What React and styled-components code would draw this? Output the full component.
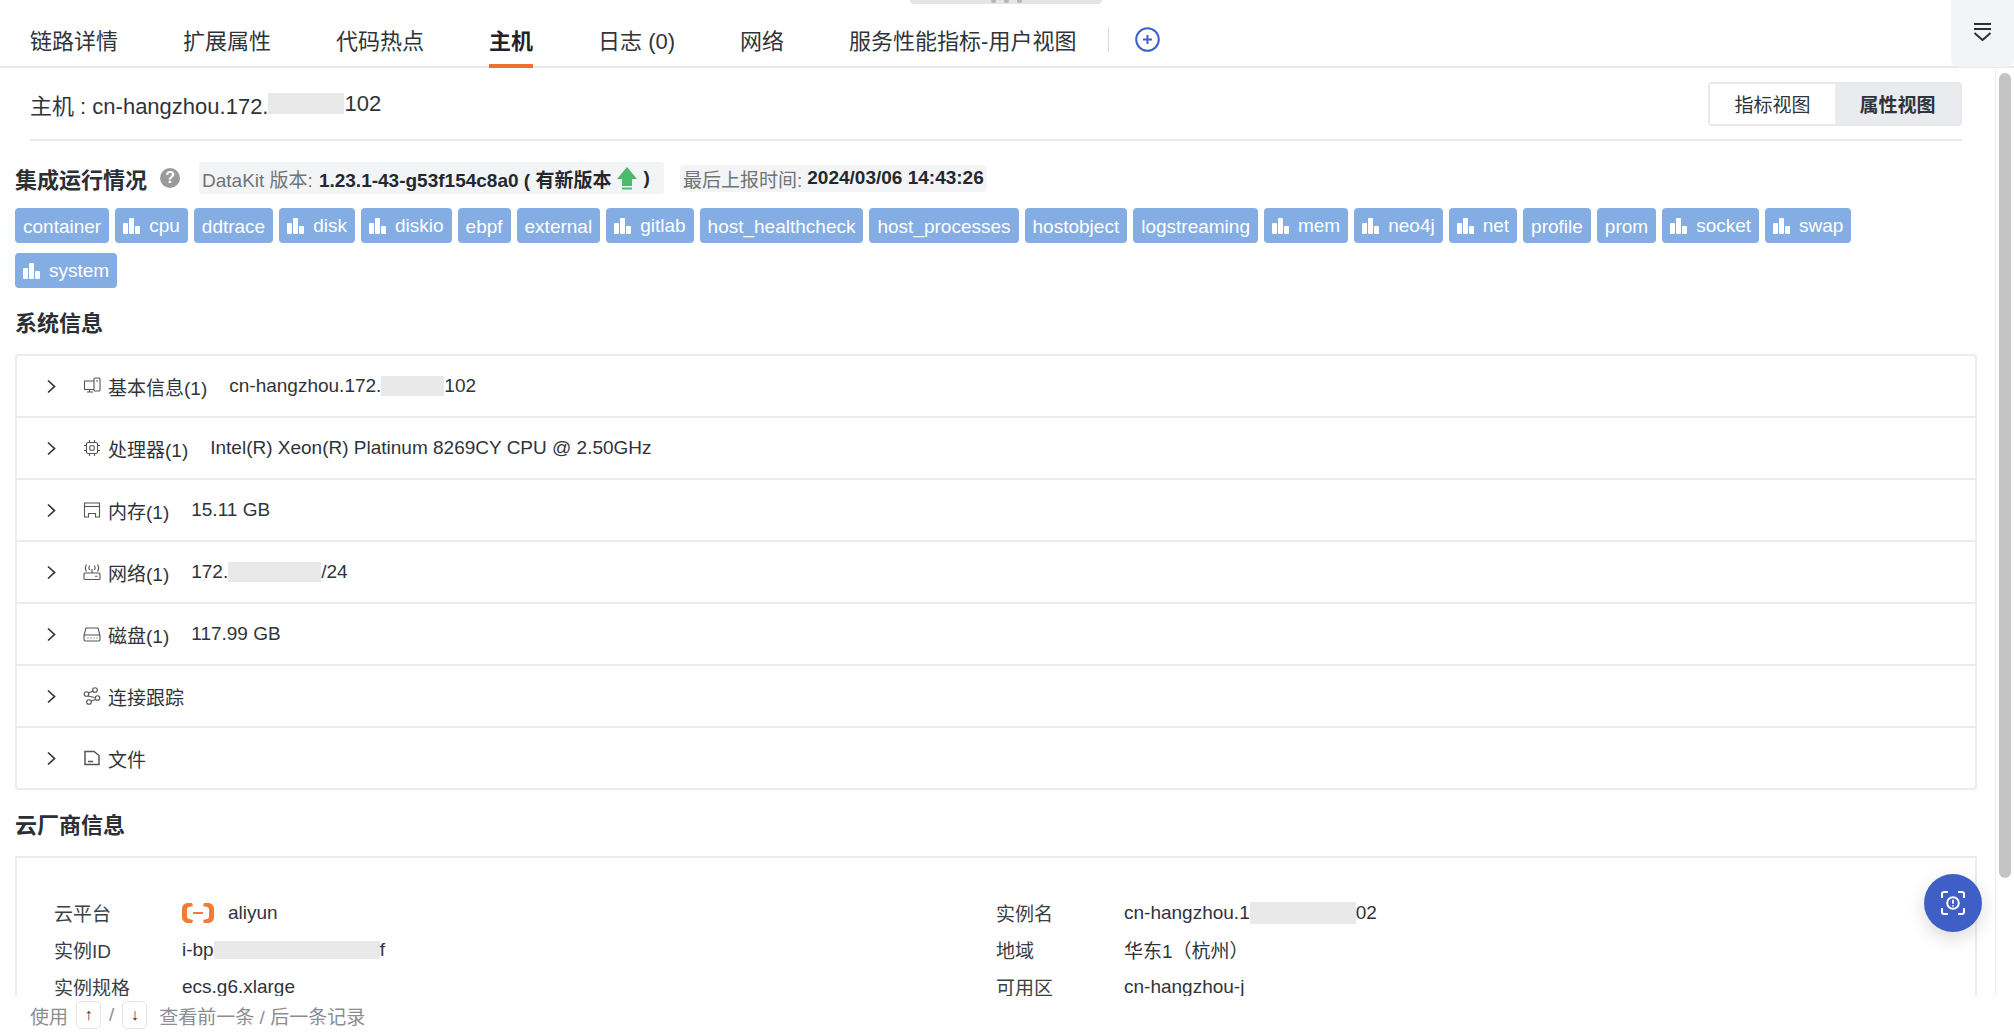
import React from "react";
import styled, { createGlobalStyle } from "styled-components";

const FONT = `"Liberation Sans", Arial, "Noto Sans CJK SC", sans-serif`;

const tabs = ["链路详情", "扩展属性", "代码热点", "主机", "日志 (0)", "网络", "服务性能指标-用户视图"];

const tags = [
  ["container", false],
  ["cpu", true],
  ["ddtrace", false],
  ["disk", true],
  ["diskio", true],
  ["ebpf", false],
  ["external", false],
  ["gitlab", true],
  ["host_healthcheck", false],
  ["host_processes", false],
  ["hostobject", false],
  ["logstreaming", false],
  ["mem", true],
  ["neo4j", true],
  ["net", true],
  ["profile", false],
  ["prom", false],
  ["socket", true],
  ["swap", true],
  ["system", true],
];

const BarsIcon = () => (
  <svg width="17" height="16" viewBox="0 0 17 16" fill="#fff">
    <rect x="0" y="5" width="5" height="11" rx="1" />
    <rect x="6" y="0" width="5" height="16" rx="1" />
    <rect x="12" y="8" width="5" height="8" rx="1" />
  </svg>
);

const Chevron = () => (
  <svg width="9" height="15" viewBox="0 0 9 15" fill="none" stroke="#333" strokeWidth="1.7">
    <path d="M1 1.5 L7.5 7.5 L1 13.5" />
  </svg>
);

const RowSvg = ({ children }) => (
  <svg width="18" height="18" viewBox="0 0 18 18" fill="none" stroke="#555" strokeWidth="1.1">
    {children}
  </svg>
);

const HostIcon = () => (
  <RowSvg>
    <path d="M11 4H1.500v8.500H11M4 15h6M6.500 12.500V15" />
    <rect x="11" y="1" width="6" height="13" rx="1" />
    <path d="M13 4h2" />
  </RowSvg>
);
const CpuIcon = () => (
  <RowSvg>
    <rect x="3.500" y="3.500" width="11" height="11" rx="1.500" />
    <rect x="6.800" y="6.800" width="4.400" height="4.400" rx="1" />
    <path d="M6.500 1v2.500M11.500 1v2.500M6.500 14.500V17M11.500 14.500V17M1 6.500h2.500M1 11.500h2.500M14.500 6.500H17M14.500 11.500H17" />
  </RowSvg>
);
const MemoryIcon = () => (
  <RowSvg>
    <path d="M1.500 2h15v14h-4v-3.500h-7V16h-4z" />
    <path d="M1.500 5.500h15" />
  </RowSvg>
);
const NetworkIcon = () => (
  <RowSvg>
    <rect x="1" y="10" width="16" height="6.500" rx="1" />
    <path d="M12 13.300h2.500M9 6v4M6.500 2.500c-.8 1.500-.8 3 0 4.500M11.500 2.500c.8 1.500.8 3 0 4.500M3.500 1.500c-1.300 2-1.300 5 0 7M14.500 1.500c1.300 2 1.300 5 0 7" />
  </RowSvg>
);
const DiskIcon = () => (
  <RowSvg>
    <path d="M1 10.500L3 3h12l2 7.500" />
    <rect x="1" y="10" width="16" height="6" rx="1.500" />
    <path d="M4.500 13h1M7.500 13h1M10.500 13h1M13.500 13h1" />
  </RowSvg>
);
const TraceIcon = () => (
  <RowSvg>
    <circle cx="3.500" cy="7" r="2.300" />
    <circle cx="12" cy="3" r="2.300" />
    <circle cx="14.500" cy="11" r="2.300" />
    <circle cx="6" cy="15" r="2.300" />
    <path d="M5.500 6l4.500-2M5 9l6.500 1.500M12.500 12.500L8 14.300" />
  </RowSvg>
);
const FileIcon = () => (
  <RowSvg>
    <path d="M2 2.500h9l5 4v9H2z" strokeWidth="1.500" />
    <path d="M5 12.500h5" strokeWidth="1.500" />
  </RowSvg>
);

export default function App() {
  const sections = [
    { icon: <HostIcon />, label: "基本信息(1)", value: <>cn-hangzhou.172.<Mask $w={63} />102</> },
    { icon: <CpuIcon />, label: "处理器(1)", value: "Intel(R) Xeon(R) Platinum 8269CY CPU @ 2.50GHz" },
    { icon: <MemoryIcon />, label: "内存(1)", value: "15.11 GB" },
    { icon: <NetworkIcon />, label: "网络(1)", value: <>172.<Mask $w={93} />/24</> },
    { icon: <DiskIcon />, label: "磁盘(1)", value: "117.99 GB" },
    { icon: <TraceIcon />, label: "连接跟踪" },
    { icon: <FileIcon />, label: "文件" },
  ];

  return (
    <>
      <GlobalStyle />
      <Page>
        <TopPill>
          <PillDot />
          <PillDot />
          <PillDot />
        </TopPill>
        <TabBar>
          {tabs.map((t) => (
            <Tab key={t} $active={t === "主机"}>{t}</Tab>
          ))}
          <TabDivider />
          <AddButton>
            <svg width="25" height="25" viewBox="0 0 25 25" fill="none" stroke="#3f5fc9" strokeWidth="2">
              <circle cx="12.500" cy="12.500" r="11.300" />
              <path d="M12.500 8v9M8 12.500h9" />
            </svg>
          </AddButton>
          <CollapseButton>
            <svg width="19" height="18" viewBox="0 0 19 18" fill="none" stroke="#2b2f36" strokeWidth="2">
              <path d="M1 1h17M1 6h17M1.500 10l8 7 8-7" />
            </svg>
          </CollapseButton>
        </TabBar>

        <Body>
          <Content>
            <HostHeader>
              <HostTitle>主机 : cn-hangzhou.172.<Mask $w={76} $h={21} />102</HostTitle>
              <Toggle>
                <ToggleItem>指标视图</ToggleItem>
                <ToggleItem $active>属性视图</ToggleItem>
              </Toggle>
            </HostHeader>

            <Section>
              <StatusLine>
                <Heading>集成运行情况</Heading>
                <HelpIcon>?</HelpIcon>
                <VersionChip>
                  <Muted>DataKit 版本:</Muted>
                  <Strong>1.23.1-43-g53f154c8a0 ( 有新版本</Strong>
                  <svg width="20" height="23" viewBox="0 0 20 23" fill="#4cb96b">
                    <path d="M10 0L20 12H15V19H5V12H0Z" />
                    <rect x="5" y="20.500" width="10" height="2" />
                  </svg>
                  <Strong>)</Strong>
                </VersionChip>
                <ReportChip>
                  <Muted>最后上报时间:</Muted>
                  <Strong>2024/03/06 14:43:26</Strong>
                </ReportChip>
              </StatusLine>

              <TagList>
                {tags.map(([name, hasChart]) => (
                  <Tag key={name} $chart={hasChart}>
                    {hasChart && <BarsIcon />}
                    {name}
                  </Tag>
                ))}
              </TagList>

              <SectionHeading>系统信息</SectionHeading>
              <Accordion>
                {sections.map((s) => (
                  <AccordionRow key={s.label}>
                    <Chevron />
                    <RowIcon>{s.icon}</RowIcon>
                    <RowLabel>{s.label}</RowLabel>
                    {s.value && <RowValue>{s.value}</RowValue>}
                  </AccordionRow>
                ))}
              </Accordion>

              <SectionHeading>云厂商信息</SectionHeading>
              <CloudBox>
                <CloudGrid>
                  <CloudLabel>云平台</CloudLabel>
                  <CloudValue>
                    <svg width="32" height="20" viewBox="0 0 32 20" fill="#f47a37">
                      <path d="M10 0H6C2.500 0 0 2.500 0 6v8c0 3.500 2.500 6 6 6h4l1-3-4-1c-1-.3-2-1-2-2.500V6.500c0-1.500 1-2.200 2-2.500l4-1z" />
                      <path d="M22 0h4c3.500 0 6 2.500 6 6v8c0 3.500-2.500 6-6 6h-4l-1-3 4-1c1-.3 2-1 2-2.500V6.500c0-1.500-1-2.200-2-2.500l-4-1z" />
                      <rect x="11" y="9" width="10" height="2" />
                    </svg>
                    <AliyunName>aliyun</AliyunName>
                  </CloudValue>
                  <CloudLabel>实例名</CloudLabel>
                  <CloudValue>cn-hangzhou.1<Mask $w={106} $h={22} />02</CloudValue>
                  <CloudLabel>实例ID</CloudLabel>
                  <CloudValue>i-bp<Mask $w={166} $h={18} />f</CloudValue>
                  <CloudLabel>地域</CloudLabel>
                  <CloudValue>华东1（杭州）</CloudValue>
                  <CloudLabel>实例规格</CloudLabel>
                  <CloudValue>ecs.g6.xlarge</CloudValue>
                  <CloudLabel>可用区</CloudLabel>
                  <CloudValue>cn-hangzhou-j</CloudValue>
                </CloudGrid>
              </CloudBox>
            </Section>
          </Content>
          <ScrollTrack>
            <ScrollThumb />
          </ScrollTrack>
          <FloatButton>
            <svg width="24" height="24" viewBox="0 0 24 24" fill="none" stroke="#fff" strokeWidth="2">
              <path d="M1 7V3a2 2 0 0 1 2-2h4M17 1h4a2 2 0 0 1 2 2v4M23 17v4a2 2 0 0 1-2 2h-4M7 23H3a2 2 0 0 1-2-2v-4" />
              <circle cx="12" cy="12" r="5.800" />
              <path d="M12 8.800v4M12 14.200v1.200" strokeWidth="1.800" />
            </svg>
          </FloatButton>
        </Body>

        <Footer>
          <span>使用</span>
          <KeyCap>↑</KeyCap>
          <span>/</span>
          <KeyCap>↓</KeyCap>
          <FooterHint>查看前一条 / 后一条记录</FooterHint>
        </Footer>
      </Page>
    </>
  );
}

const GlobalStyle = createGlobalStyle`
  html, body {
    margin: 0;
    padding: 0;
    background: #fff;
  }
  body {
    font-family: ${FONT};
    color: #2b2f36;
    overflow: hidden;
  }
`;

const Page = styled.div`
  position: relative;
  height: 100vh;
  display: flex;
  flex-direction: column;
`;

const TopPill = styled.div`
  position: absolute;
  top: 0;
  left: 910px;
  width: 192px;
  height: 4px;
  background: #e3e5e8;
  border-radius: 0 0 6px 6px;
  display: flex;
  justify-content: center;
  gap: 8px;
  overflow: hidden;
`;

const PillDot = styled.div`
  width: 5px;
  height: 5px;
  margin-top: -2px;
  border-radius: 50%;
  background: #b4b6ba;
`;

const TabBar = styled.div`
  height: 68px;
  box-sizing: border-box;
  flex: none;
  display: flex;
  align-items: stretch;
  padding-left: 30px;
  gap: 65px;
  border-bottom: 2px solid #e8e9eb;
  position: relative;
`;

const Tab = styled.div`
  display: flex;
  align-items: center;
  height: 68px;
  box-sizing: border-box;
  padding-top: 13px;
  font-size: 22px;
  color: ${(p) => (p.$active ? "#1f2329" : "#2f343b")};
  font-weight: ${(p) => (p.$active ? 700 : 400)};
  border-bottom: 4px solid ${(p) => (p.$active ? "#f0702e" : "transparent")};
  white-space: nowrap;
`;

const TabDivider = styled.div`
  width: 1px;
  height: 25px;
  margin: 27px 0 0 -33px;
  background: #d9dadd;
`;

const AddButton = styled.div`
  margin: 27px 0 0 -39px;
  height: 25px;
`;

const CollapseButton = styled.div`
  position: absolute;
  top: 0;
  right: 0;
  width: 63px;
  height: 67px;
  background: #f3f4f6;
  border-radius: 0 0 8px 8px;
  display: flex;
  justify-content: center;
  padding-top: 23px;
  box-sizing: border-box;
`;

const Body = styled.div`
  flex: 1;
  min-height: 0;
  display: flex;
  position: relative;
`;

const Content = styled.div`
  flex: 1;
  min-width: 0;
  overflow: hidden;
`;

const HostHeader = styled.div`
  height: 73px;
  box-sizing: border-box;
  margin: 0 33px 0 30px;
  display: flex;
  align-items: center;
  justify-content: space-between;
  border-bottom: 2px solid #e8e9eb;
`;

const HostTitle = styled.div`
  font-size: 22px;
  display: flex;
  align-items: center;
  color: #2f343b;
`;

const Mask = styled.span`
  display: inline-block;
  width: ${(p) => p.$w}px;
  height: ${(p) => p.$h || 20}px;
  background: #e9e9e9;
  vertical-align: middle;
`;

const Toggle = styled.div`
  display: flex;
  height: 44px;
  box-sizing: border-box;
  border: 2px solid #e8e9eb;
  border-radius: 4px;
`;

const ToggleItem = styled.div`
  width: 125px;
  display: flex;
  align-items: center;
  justify-content: center;
  font-size: 19px;
  color: #2f343b;
  font-weight: ${(p) => (p.$active ? 700 : 400)};
  background: ${(p) => (p.$active ? "#e9ebee" : "#fff")};
`;

const Section = styled.div`
  padding: 0 18px 0 15px;
`;

const StatusLine = styled.div`
  display: flex;
  align-items: center;
  height: 32px;
  margin-top: 21px;
`;

const Heading = styled.div`
  font-size: 22px;
  font-weight: 700;
  color: #2b2f36;
`;

const HelpIcon = styled.div`
  width: 20px;
  height: 20px;
  margin-left: 13px;
  border-radius: 50%;
  background: #9a9a9a;
  color: #fff;
  font-size: 16px;
  font-weight: 700;
  line-height: 20px;
  text-align: center;
`;

const Muted = styled.span`
  color: #6f7378;
`;

const Strong = styled.span`
  font-weight: 700;
  color: #24282e;
`;

const VersionChip = styled.div`
  height: 32px;
  margin-left: 19px;
  padding: 0 4px 0 3px;
  width: 465px;
  box-sizing: border-box;
  display: flex;
  align-items: center;
  gap: 6px;
  background: #f3f4f6;
  border-radius: 3px;
  font-size: 19px;
  white-space: nowrap;
`;

const ReportChip = styled.div`
  height: 27px;
  margin-left: 16px;
  padding: 0 3px;
  display: flex;
  align-items: center;
  gap: 5px;
  background: #f3f4f6;
  border-radius: 3px;
  font-size: 19px;
  white-space: nowrap;
`;

const TagList = styled.div`
  display: flex;
  flex-wrap: wrap;
  gap: 10px 6px;
  margin-top: 14px;
  width: 1900px;
`;

const Tag = styled.div`
  height: 35px;
  box-sizing: border-box;
  padding: ${(p) => (p.$chart ? "0 8px" : "3px 8px 0")};
  display: flex;
  align-items: center;
  gap: 9px;
  background: #84ade3;
  color: #fff;
  font-size: 19px;
  border-radius: 4px;
  white-space: nowrap;
`;

const SectionHeading = styled.div`
  font-size: 22px;
  font-weight: 700;
  color: #2b2f36;
  line-height: 30px;
  margin-top: 21px;
  margin-bottom: 15px;
`;

const Accordion = styled.div`
  border: 2px solid #ececee;
  border-radius: 4px;
  margin-bottom: 20px;
`;

const AccordionRow = styled.div`
  height: 62px;
  box-sizing: border-box;
  padding-left: 30px;
  display: flex;
  align-items: center;
  font-size: 19px;
  border-bottom: 2px solid #ececee;
  &:last-child {
    border-bottom: none;
    height: 60px;
  }
`;

const RowIcon = styled.div`
  margin-left: 27px;
  height: 18px;
`;

const RowLabel = styled.div`
  margin-left: 7px;
  color: #2f343b;
`;

const RowValue = styled.div`
  margin-left: 22px;
  color: #2f343b;
  display: flex;
  align-items: center;
`;

const CloudBox = styled.div`
  border: 2px solid #ececee;
  border-bottom: none;
  padding: 36px 0 0 37px;
  height: 300px;
`;

const CloudGrid = styled.div`
  display: grid;
  grid-template-columns: 128px 814px 128px 1fr;
  grid-auto-rows: 37px;
  align-items: center;
`;

const CloudLabel = styled.div`
  font-size: 19px;
  color: #3a3f46;
`;

const CloudValue = styled.div`
  font-size: 19px;
  color: #2f343b;
  display: flex;
  align-items: center;
`;

const AliyunName = styled.span`
  margin-left: 14px;
`;

const ScrollTrack = styled.div`
  width: 19px;
  flex: none;
  box-sizing: border-box;
  border-left: 1px solid #ececee;
  padding: 5px 4px 0 3px;
`;

const ScrollThumb = styled.div`
  width: 12px;
  height: 805px;
  background: #c4c4c4;
  border-radius: 6px;
`;

const FloatButton = styled.div`
  position: absolute;
  left: 1924px;
  top: 806px;
  width: 58px;
  height: 58px;
  border-radius: 50%;
  background: #3f5fc6;
  box-shadow: 0 6px 18px rgba(0, 0, 0, 0.15);
  display: flex;
  align-items: center;
  justify-content: center;
`;

const Footer = styled.div`
  height: 38px;
  flex: none;
  box-sizing: border-box;
  padding-left: 30px;
  display: flex;
  align-items: center;
  gap: 8px;
  font-size: 19px;
  color: #8a8d92;
  background: #fff;
`;

const KeyCap = styled.div`
  width: 25px;
  height: 28px;
  box-sizing: border-box;
  border: 1px solid #e2e3e6;
  border-radius: 5px;
  display: flex;
  align-items: center;
  justify-content: center;
  font-size: 16px;
  color: #2b2f36;
`;

const FooterHint = styled.span`
  margin-left: 4px;
`;
